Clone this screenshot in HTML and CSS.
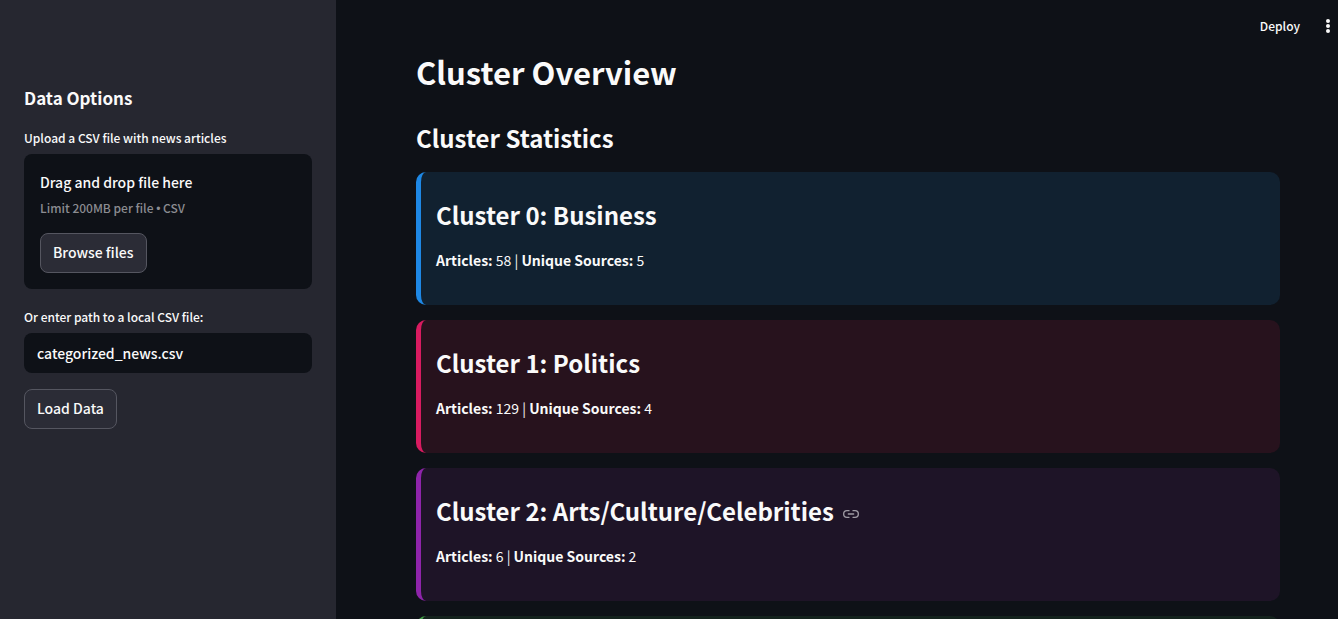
FILE: index.html
```html
<!DOCTYPE html>
<html lang="en">
<head>
<meta charset="utf-8">
<meta name="viewport" content="width=device-width, initial-scale=1">
<title>Cluster Overview</title>
<link rel="stylesheet" href="styles.css">
</head>
<body>
<div class="app">
  <aside class="sidebar">
    <h3 class="sidebar-title">Data Options</h3>
    <label class="field-label" for="browse">Upload a CSV file with news articles</label>
    <div class="dropzone">
      <p class="drop-title">Drag and drop file here</p>
      <p class="drop-hint">Limit 200MB per file <span class="bullet">•</span> CSV</p>
      <button class="btn" id="browse" type="button">Browse files</button>
    </div>
    <label class="field-label" for="path">Or enter path to a local CSV file:</label>
    <input class="text-input" id="path" type="text" value="categorized_news.csv">
    <button class="btn" type="button">Load Data</button>
  </aside>
  <div class="page">
    <header class="toolbar">
      <button class="tool-btn" type="button">Deploy</button>
      <button class="tool-btn menu-btn" type="button" aria-label="Main menu">
        <svg class="menu-icon" viewBox="0 0 20 20" fill="currentColor" aria-hidden="true"><circle cx="10" cy="5" r="2"/><circle cx="10" cy="10" r="2"/><circle cx="10" cy="15" r="2"/></svg>
      </button>
    </header>
    <main class="content">
      <h1 class="page-title">Cluster Overview</h1>
      <h2 class="section-title">Cluster Statistics</h2>
      <div class="cards">
        <section class="card card-blue">
          <h3 class="card-title">Cluster 0: Business</h3>
          <p class="card-stats"><strong>Articles:</strong> 58 | <strong>Unique Sources:</strong> 5</p>
        </section>
        <section class="card card-red">
          <h3 class="card-title">Cluster 1: Politics</h3>
          <p class="card-stats"><strong>Articles:</strong> 129 | <strong>Unique Sources:</strong> 4</p>
        </section>
        <section class="card card-purple">
          <h3 class="card-title" id="arts">Cluster 2: Arts/Culture/Celebrities
            <a class="anchor" href="#arts" aria-label="Link to heading"><svg class="anchor-icon" viewBox="0 0 24 24" fill="none" stroke="currentColor" stroke-width="2" stroke-linecap="round" aria-hidden="true"><path d="M15 7h3a5 5 0 0 1 5 5 5 5 0 0 1-5 5h-3m-6 0H6a5 5 0 0 1-5-5 5 5 0 0 1 5-5h3M8 12h8"/></svg></a>
          </h3>
          <p class="card-stats"><strong>Articles:</strong> 6 | <strong>Unique Sources:</strong> 2</p>
        </section>
        <section class="card card-green"></section>
      </div>
    </main>
  </div>
</div>
</body>
</html>
```
FILE: styles.css
```css
* { box-sizing: border-box; }
body {
  margin: 0;
  background: #0e1117;
  color: #fafafa;
  font-family: "Noto Sans CJK SC", "Noto Sans", sans-serif;
  font-size: 14px;
  line-height: 24px;
}
h1, h2, h3, p { margin: 0; }
.app { display: flex; height: 100vh; overflow: hidden; }
.sidebar {
  flex: 0 0 336px;
  padding: 86px 24px 24px;
  background: #262730;
  display: flex;
  flex-direction: column;
  align-items: flex-start;
}
.sidebar-title { font-size: 17px; line-height: 24px; font-weight: 600; margin-bottom: 16px; }
.field-label { font-size: 12px; font-weight: 500; line-height: 24px; margin-bottom: 4px; }
.dropzone {
  width: 100%;
  padding: 15px 16px 16px;
  margin-bottom: 16px;
  border-radius: 8px;
  background: #0e1117;
}
.drop-title { font-weight: 500; line-height: 26px; }
.drop-hint { font-size: 12px; font-weight: 500; line-height: 26px; color: #8b8c91; margin-bottom: 12px; }
.bullet { font-family: "Liberation Sans", sans-serif; line-height: 1; }
.btn {
  height: 40px;
  padding: 0 12px 2px;
  border: 1px solid #555660;
  border-radius: 8px;
  background: #2b2c36;
  color: inherit;
  font: inherit;
  font-weight: 500;
}
.text-input {
  width: 100%;
  height: 40px;
  padding: 0 13px;
  margin-bottom: 16px;
  border: 0;
  border-radius: 8px;
  background: #0e1117;
  color: inherit;
  font: inherit;
  font-weight: 500;
}
.page { flex: 1; min-width: 0; }
.toolbar {
  height: 52px;
  display: flex;
  align-items: center;
  justify-content: flex-end;
  gap: 18px;
}
.tool-btn { display: flex; padding: 0; border: 0; background: none; color: inherit; font: inherit; font-size: 12px; font-weight: 500; }
.menu-icon { width: 20px; height: 20px; }
.content { padding: 0 58px 0 80px; }
.page-title { font-size: 31px; line-height: 40px; font-weight: 600; margin-bottom: 29px; }
.section-title { font-size: 24px; line-height: 34px; font-weight: 600; margin-bottom: 17px; }
.cards { display: flex; flex-direction: column; gap: 15px; }
.card {
  min-height: 133px;
  padding: 26px 15px 25px;
  border-left: 5px solid;
  border-radius: 10px;
}
.card-blue { border-color: #1e88e5; background: #112130; }
.card-red { border-color: #d81b60; background: #27121d; }
.card-purple { border-color: #8e24aa; background: #1e1427; }
.card-green { border-color: #43a047; background: #14221d; }
.card-title { font-size: 24px; line-height: 34px; font-weight: 600; color: #fafafa; margin-bottom: 16px; }
.card-stats { line-height: 24px; }
.anchor { color: #a09ca5; margin-left: 4px; }
.anchor-icon { width: 16px; height: 16px; vertical-align: -1px; }
```
